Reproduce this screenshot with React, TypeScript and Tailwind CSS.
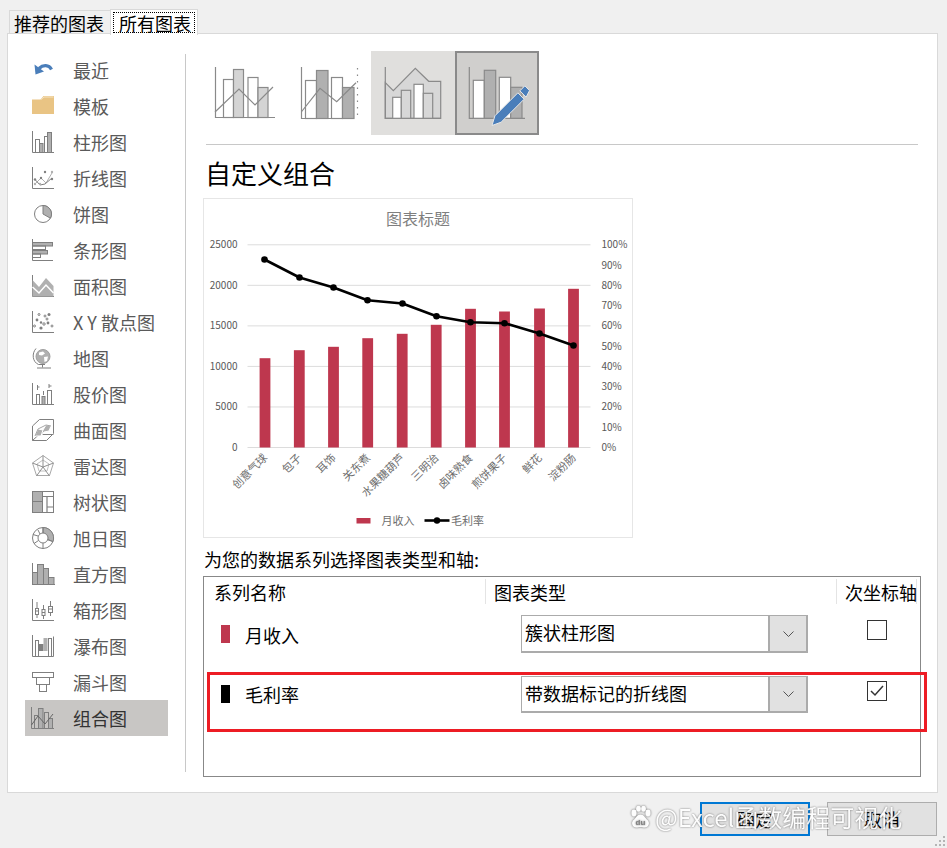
import React from "react";

const S = "#7f7f7f";
const G = "#b0b0b0";

function I({ children }: { children: React.ReactNode }) {
  return (
    <svg width="22" height="22" viewBox="0 0 22 22" fill="none" stroke={S} strokeWidth="1" className="shrink-0 overflow-visible">
      {children}
    </svg>
  );
}

const Dot = ({ x, y, f = S, r = 1.2 }: { x: number; y: number; f?: string; r?: number }) => (
  <circle cx={x} cy={y} r={r} fill={f} stroke="none" />
);

const icons: Record<string, React.ReactNode> = {
  recent: (
    <I>
      <path d="M19.5 10.5C17 5.5 11 5.5 7 9.5" stroke="#4a7eba" strokeWidth="3.2" />
      <path d="M2.5 5.5L3.5 15.5L12 12.5Z" fill="#4a7eba" stroke="none" />
    </I>
  ),
  folder: (
    <I>
      <path d="M0 4.5H8.5L11.5 1H22V19H0Z" fill="#e9c484" stroke="none" />
      <path d="M9 4.5L12 2H21.5" stroke="#f6e4c2" />
    </I>
  ),
  bar: (
    <I>
      <path d="M.5 0V21.5H22" />
      <rect x="3.5" y="8.5" width="4" height="13" />
      <rect x="7.5" y="12.5" width="3.5" height="9" fill={G} />
      <rect x="12.5" y="5.5" width="3" height="16" />
      <rect x="15.5" y="1.5" width="4" height="20" fill={G} />
    </I>
  ),
  line: (
    <I>
      <path d="M.5 0V21.5H22" />
      <path d="M3 17L9 11L14 16L20 6" stroke={G} />
      <path d="M3 12.5L8 18L13 17L20 11" stroke={S} />
      <Dot x={3} y={12.5} /><Dot x={13} y={5} /><Dot x={20} y={12} /><Dot x={9} y={11} />
      <Dot x={3} y={17} f={G} /><Dot x={8} y={17} f={G} /><Dot x={20} y={5} f={G} />
    </I>
  ),
  pie: (
    <I>
      <circle cx="11" cy="11" r="8.5" />
      <path d="M11 11V2.5A8.5 8.5 0 0 1 18.4 15.2Z" fill={G} />
    </I>
  ),
  hbar: (
    <I>
      <path d="M.5 0V21.5H21" />
      <rect x=".5" y="3.5" width="20" height="3.5" fill={G} />
      <rect x=".5" y="7" width="13" height="3.5" />
      <rect x=".5" y="11.5" width="15" height="3.5" fill={G} />
      <rect x=".5" y="15" width="8" height="3.5" />
    </I>
  ),
  area: (
    <I>
      <path d="M.5 0V21.5H22" />
      <path d="M.5 5L7 12L14 3L21.5 11V21.5H.5Z" fill={G} stroke="none" />
      <path d="M.5 12L7 18L14 10L21.5 18" stroke="#fff" strokeWidth="1.5" />
    </I>
  ),
  scatter: (
    <I>
      <path d="M.5 0V21.5H22" />
      <circle cx="7" cy="3.5" r="1" /><Dot x={17} y={3.5} r={1.5} /><circle cx="13" cy="5" r="1" />
      <Dot x={5} y={9} r={1.4} /><Dot x={16} y={12} r={1.4} /><circle cx="12" cy="13" r="1.2" />
      <Dot x={9} y={11.5} r={1.2} /><circle cx="2.5" cy="15" r="1" /><circle cx="20" cy="15" r="1" />
      <Dot x={9} y={17} r={1.6} /><circle cx="15" cy="8" r="1" />
    </I>
  ),
  map: (
    <I>
      <circle cx="11" cy="9.5" r="7" fill={G} stroke="#a0a0a0" />
      <path d="M7 5.5L11 4.5L13 6.5L10 8.5L7 8ZM12 10L16 9.5L15 14L12.5 15Z" fill="#fff" stroke="none" />
      <path d="M4 1.5C-.5 6.5 .5 15 6.5 17.5H13M10.5 18V20.5M5 21H19" />
    </I>
  ),
  stock: (
    <I>
      <path d="M.5 0V21.5H22" />
      <rect x="4.5" y="11.5" width="3" height="10" />
      <rect x="10" y="13.5" width="3" height="8" fill={G} />
      <rect x="15.5" y="7.5" width="4" height="14" />
      <path d="M5.5 2V7M11.5 8V12M17 1V5M5.5 4H7.5M17 3H19.5" />
    </I>
  ),
  surface: (
    <I>
      <path d="M.5 7L7.5 .5H21.5V14.5L14.5 21.5H.5Z" />
      <path d="M.5 21.5L7 15.5H21.5" />
      <path d="M3 17L6 10L11 11L14 6L19 7L17 12L12 13L9 17Z" fill={G} stroke="#fff" />
      <path d="M6 10L14 6M9 17L11 11" stroke="#fff" />
      <path d="M3 17L6 10L14 6L19 7" stroke={S} strokeWidth=".7" />
    </I>
  ),
  radar: (
    <I>
      <path d="M11 .5L21.5 8L17.5 20.5H4.5L.5 8Z" stroke="#a8a8a8" />
      <path d="M11 5L17 9L15 16H7L5 9Z" stroke="#c0c0c0" />
      <path d="M11 .5V12M21.5 8L11 12L17.5 21M4.5 21L11 12L.5 8" stroke="#8f8f8f" />
    </I>
  ),
  tree: (
    <I>
      <rect x=".5" y=".5" width="21" height="21" />
      <rect x=".5" y=".5" width="10" height="21" fill={G} />
      <path d="M.5 10.5H10.5M10.5 5.5H21.5M15 5.5V21.5M15 16H21.5" strokeWidth="1.2" />
    </I>
  ),
  sun: (
    <I>
      <circle cx="11" cy="11" r="10.5" />
      <path d="M11 .5A10.5 10.5 0 0 1 21 14.5L15.5 12.5A4.5 4.5 0 0 0 11 6.5Z" fill={G} />
      <circle cx="11" cy="11" r="5" fill="#fff" />
      <path d="M6.5 13.5L2 16.5M11 16V21.5M15.5 12.5L20.5 14.5M6 9L1 7.5M11 6V.5M6 3L8 7" stroke={S} />
    </I>
  ),
  hist: (
    <I>
      <path d="M.5 0V21.5H23" />
      <rect x=".5" y="9.5" width="5" height="12" fill={G} />
      <rect x="5.5" y="1.5" width="6" height="20" fill={G} />
      <rect x="11.5" y="5.5" width="5" height="16" fill={G} />
      <rect x="16.5" y="14.5" width="5.5" height="7" fill={G} />
    </I>
  ),
  box: (
    <I>
      <path d="M.5 0V21.5H22" />
      <rect x="3.5" y="9.5" width="3" height="6" />
      <rect x="10" y="10.5" width="3" height="6" />
      <rect x="16.5" y="7.5" width="4" height="6" />
      <path d="M5 3V9M5 15.5V19M11.5 6V10M11.5 16.5V20M18.5 2V7M18.5 13.5V17M3 12H6.5M10 13.5H13M16.5 10H20.5" />
    </I>
  ),
  fall: (
    <I>
      <path d="M.5 0V21.5H21.5V1.5" />
      <rect x="3.5" y="5.5" width="3" height="16" />
      <rect x="6.5" y="9" width="5" height="7" fill={S} stroke="none" />
      <rect x="11.5" y="3" width="4" height="13" fill={G} stroke="none" />
      <rect x="16.5" y="3.5" width="3" height="18" />
    </I>
  ),
  funnel: (
    <I>
      <rect x=".5" y="1.5" width="21" height="5" />
      <rect x="4.5" y="6.5" width="13" height="7" />
      <rect x="7.5" y="13.5" width="7" height="7" />
    </I>
  ),
  combo: (
    <I>
      <path d="M-.5 0V21.5H22" />
      <rect x="2.5" y="8.5" width="4" height="13" />
      <rect x="6.5" y="1.5" width="4.5" height="20" fill={G} />
      <rect x="12.5" y="5.5" width="4" height="16" />
      <rect x="16.5" y="11.5" width="4" height="10" fill={G} />
      <path d="M-.5 18L6 9L13 17L21 7" stroke="#666" />
    </I>
  ),
};

const items: [string, string][] = [
  ["recent", "最近"], ["folder", "模板"], ["bar", "柱形图"], ["line", "折线图"], ["pie", "饼图"],
  ["hbar", "条形图"], ["area", "面积图"], ["scatter", "X Y 散点图"], ["map", "地图"], ["stock", "股价图"],
  ["surface", "曲面图"], ["radar", "雷达图"], ["tree", "树状图"], ["sun", "旭日图"], ["hist", "直方图"],
  ["box", "箱形图"], ["fall", "瀑布图"], ["funnel", "漏斗图"], ["combo", "组合图"],
];

const TS = "#8a8a8a";

function Thumb1() {
  return (
    <svg width="84" height="84" viewBox="0 0 84 84" fill="none" stroke={TS} strokeWidth="1.2">
      <path d="M12.5 16V66.5H72" />
      <rect x="20.5" y="28.5" width="10" height="38" fill="#fff" />
      <rect x="30.5" y="18.5" width="10" height="48" fill="#d4d4d4" />
      <rect x="45" y="26.5" width="10" height="40" fill="#fff" />
      <rect x="55" y="36.5" width="10" height="30" fill="#d4d4d4" />
      <path d="M12 61L36 38L52 54L70 36" />
    </svg>
  );
}
function Thumb2() {
  return (
    <svg width="84" height="84" viewBox="0 0 84 84" fill="none" stroke={TS} strokeWidth="1.2">
      <path d="M14.5 16V67.5H67" />
      <rect x="18.5" y="29.5" width="11" height="38" fill="#fff" />
      <rect x="29.5" y="19.5" width="11.5" height="48" fill="#b0b0b0" />
      <rect x="44.5" y="26.5" width="11" height="41" fill="#fff" />
      <rect x="55.5" y="36.5" width="11.5" height="31" fill="#b0b0b0" />
      <path d="M14.3 61L33 37.3L49.7 50.7L69 31.7" />
      <path d="M70.5 17V67" strokeDasharray="1.5 5" />
    </svg>
  );
}
function Thumb3() {
  return (
    <svg width="84" height="84" viewBox="0 0 84 84" fill="none" stroke={TS} strokeWidth="1.2">
      <path d="M14.3 31.7L22.3 39.7L44.3 17.3L57.7 30.3H69.7V67.3H14.3Z" fill="#d7d7d7" />
      <path d="M14.3 16V67.3H70" />
      <rect x="21.7" y="46.3" width="8.6" height="21" fill="#fff" />
      <rect x="30.3" y="39.3" width="9.4" height="28" fill="#d7d7d7" />
      <rect x="43" y="33.3" width="9.3" height="34" fill="#fff" />
      <rect x="52.3" y="42.3" width="9.4" height="25" fill="#d7d7d7" />
    </svg>
  );
}
function Thumb4() {
  return (
    <svg width="80" height="80" viewBox="2 2 80 80" fill="none" stroke={TS} strokeWidth="1.2">
      <path d="M14.3 16V67.3H70" />
      <rect x="18.3" y="29.3" width="11" height="38" fill="#fff" />
      <rect x="29.3" y="19.3" width="11.4" height="48" fill="#b0b0b0" />
      <rect x="44.3" y="26.3" width="11.4" height="41" fill="#fff" />
      <rect x="55.7" y="36.3" width="11.3" height="31" fill="#b0b0b0" />
      <path d="M37 74.5L39.9 64.8L62.9 41.8L69.1 48.2L46.1 71.2Z" fill="#4a7eba" stroke="#e8e8e8" strokeWidth="1" />
      <path d="M64.9 39.8L69.9 34.8L74.5 39.6L71.1 46.2Z" fill="#4a7eba" stroke="#e8e8e8" strokeWidth="1" />
    </svg>
  );
}

const bars: [number, number][] = [
  [265.5, 357.7], [299.8, 349.7], [334, 346.3], [368.2, 337.7], [402.7, 333.3],
  [436.7, 324.3], [471, 308.3], [505, 311], [540, 308], [574, 288.3],
];
const linePts: [number, number][] = [
  [265, 259], [300, 277], [334, 287], [368, 299.7], [403, 303],
  [437, 315.7], [471, 321.7], [505, 322.7], [540, 333], [574, 345],
];
const cats = ["创意气球", "包子", "耳饰", "关东煮", "水果糖葫芦", "三明治", "卤味熟食", "煎饼果子", "鲜花", "淀粉肠"];
const lefts = ["25000", "20000", "15000", "10000", "5000", "0"];
const rights = ["100%", "90%", "80%", "70%", "60%", "50%", "40%", "30%", "20%", "10%", "0%"];

const cjk = '"Noto Sans CJK SC", sans-serif';

function Chart() {
  // viewBox in page coordinates
  return (
    <svg width="430" height="340" viewBox="203.5 197.5 430 340" className="block">
      <rect x="204" y="198" width="429" height="339" fill="#fff" stroke="#e6e6e6" />
      <text x="418.5" y="224" textAnchor="middle" fontSize="16" fill="#7f7f7f" fontFamily={cjk}>图表标题</text>
      {lefts.map((t, i) => {
        const y = 244.3 + i * 40.54;
        return (
          <g key={t}>
            <line x1="248" x2="591" y1={y} y2={y} stroke="#dcdcdc" strokeWidth="1" />
            <text x="238" y={y + 3.5} textAnchor="end" fontSize="10" fill="#595959" fontFamily={cjk}>{t}</text>
          </g>
        );
      })}
      {rights.map((t, i) => (
        <text key={t} x="602" y={244.3 + i * 20.27 + 3.5} fontSize="10" fill="#595959" fontFamily={cjk}>{t}</text>
      ))}
      {bars.map(([x, y]) => (
        <rect key={x} x={x - 5.4} y={y} width="10.8" height={447 - y} fill="#be374e" />
      ))}
      <polyline points={linePts.map((p) => p.join(",")).join(" ")} fill="none" stroke="#000" strokeWidth="2.6" strokeLinejoin="round" />
      {linePts.map(([x, y]) => (
        <circle key={x} cx={x} cy={y} r="3.3" fill="#000" />
      ))}
      {cats.map((c, i) => {
        const x = bars[i][0] + 3;
        return (
          <text key={c} x={x} y={458} textAnchor="end" fontSize="11" fill="#6e6e6e" fontFamily={cjk} transform={`rotate(-45 ${x} 458)`}>{c}</text>
        );
      })}
      <rect x="357" y="517.5" width="14" height="5.5" fill="#be374e" />
      <text x="382" y="524" fontSize="11" fill="#6e6e6e" fontFamily={cjk}>月收入</text>
      <line x1="425" x2="450" y1="520" y2="520" stroke="#000" strokeWidth="2.6" />
      <circle cx="437.5" cy="520" r="3.2" fill="#000" />
      <text x="451.5" y="524" fontSize="11" fill="#6e6e6e" fontFamily={cjk}>毛利率</text>
    </svg>
  );
}

function Dropdown({ text, h }: { text: string; h: string }) {
  return (
    <div className={`ml-[36px] mt-[8px] w-[287px] ${h} border-2 border-[#ababab] border-t border-l flex bg-white`}>
      <div className="flex-1 pl-[3px] leading-[33px]">{text}</div>
      <div className="w-[38px] bg-[#e1e1e1] border-l-2 border-[#ababab] flex items-center justify-center">
        <svg width="11" height="6" viewBox="0 0 11 6" fill="none" stroke="#555" strokeWidth="1">
          <path d="M.5 .5L5.5 5.5L10.5 .5" />
        </svg>
      </div>
    </div>
  );
}

export default function App() {
  return (
    <div
      className="relative w-[947px] h-[848px] overflow-hidden bg-[#f0f0f0] text-[18px] text-black"
      style={{ fontFamily: cjk }}
    >
      {/* tabs */}
      <div className="flex items-end h-[34px] pl-[9px] pt-[8px]">
        <div className="w-[101px] h-[24px] border-t border-l border-[#d9d9d9] pl-[4px] leading-[24px]">推荐的图表</div>
        <div className="w-[88px] h-[26px] border border-[#d9d9d9] border-b-0 bg-white p-[2px] relative z-10 -mb-px">
          <div className="w-full h-[21px] border border-dotted border-black pl-[5px] leading-[20px]">所有图表</div>
        </div>
      </div>

      {/* panel */}
      <div className="ml-[7px] w-[931px] h-[760px] -mt-px border border-[#d9d9d9] bg-white flex">
        <aside className="w-[177px] pl-[17px] pt-[18px] shrink-0">
          {items.map(([k, t]) => (
            <div
              key={k}
              className={`w-[143px] h-[36px] pl-[7px] flex items-center gap-[19px] ${k === "combo" ? "bg-[#c8c6c4] text-[#333]" : "text-[#5a5a5a]"}`}
            >
              {icons[k]}
              <span className="whitespace-nowrap">{t}</span>
            </div>
          ))}
        </aside>
        <div className="w-px h-[718px] mt-[20px] bg-[#c8c8c8] shrink-0" />
        <main className="pl-[17px] pt-[17px]">
          <div className="flex h-[84px]">
            <div className="w-[84px] h-[84px]"><Thumb1 /></div>
            <div className="w-[84px] h-[84px]"><Thumb2 /></div>
            <div className="w-[84px] h-[84px] bg-[#e0dfdd]"><Thumb3 /></div>
            <div className="w-[84px] h-[84px] bg-[#d0cfcd] border-2 border-[#8a8a8a]"><Thumb4 /></div>
          </div>
          <div className="ml-[3px] mt-[9px] w-[712px] h-px bg-[#c8c8c8]" />
          <h2 className="mt-[10px] ml-[2px] text-[26px] leading-[36px] font-normal">自定义组合</h2>
          <div className="mt-[7px]"><Chart /></div>
          <div className="mt-[8px] ml-[1px] leading-[26px] whitespace-nowrap">为您的数据系列选择图表类型和轴:</div>
          <div className="mt-[4px] w-[718px] h-[201px] border border-[#888] bg-white">
            <div className="flex h-[30px] pt-[2px]">
              <div className="w-[281px] pl-[10px] leading-[26px]">系列名称</div>
              <div className="w-[351px] pl-[8px] leading-[26px] border-l border-[#e4e4e4] h-[25px]">图表类型</div>
              <div className="w-[81px] pl-[8px] leading-[26px] border-x border-[#e4e4e4] h-[25px] whitespace-nowrap">次坐标轴</div>
            </div>
            <div className="flex h-[61px]">
              <div className="w-[281px] flex pl-[17px] gap-[15px]">
                <div className="w-[9px] h-[18px] mt-[18px] bg-[#be374e]" />
                <div className="mt-[15px] leading-[26px]">月收入</div>
              </div>
              <div className="w-[351px]"><Dropdown text="簇状柱形图" h="h-[38px]" /></div>
              <div className="pl-[31px]"><div className="mt-[13px] w-[20px] h-[20px] border border-[#333]" /></div>
            </div>
            <div className="flex">
              <div className="w-[281px] flex pl-[17px] gap-[15px]">
                <div className="w-[9px] h-[18px] mt-[17px] bg-black" />
                <div className="mt-[13px] leading-[26px]">毛利率</div>
              </div>
              <div className="w-[351px]"><Dropdown text="带数据标记的折线图" h="h-[37px]" /></div>
              <div className="pl-[31px]">
                <div className="mt-[13px] w-[20px] h-[20px] border border-[#333] flex items-center justify-center">
                  <svg width="14" height="12" viewBox="0 0 14 12" fill="none" stroke="#333" strokeWidth="1.5">
                    <path d="M1 6L5 10L13 1" />
                  </svg>
                </div>
              </div>
            </div>
          </div>
        </main>
      </div>

      {/* footer */}
      <div className="flex justify-end gap-[17px] pr-[10px] pt-[9px]">
        <button className="w-[110px] h-[34px] border-2 border-[#0078d4] bg-[#e1e1e1]">确定</button>
        <button className="w-[110px] h-[34px] border border-[#adadad] bg-[#e1e1e1]">取消</button>
      </div>

      {/* red annotation */}
      <div className="absolute left-[207px] top-[672px] w-[720px] h-[60px] border-[3px] border-[#ed1c24]" />

      {/* watermark */}
      <div className="absolute left-[629px] top-[801px] flex items-center gap-[3px] text-white text-[24px] leading-[32px] whitespace-nowrap opacity-90 [text-shadow:0_0_2px_#555]">
        <svg width="23" height="24" viewBox="0 0 23 24" className="[filter:drop-shadow(0_0_1px_#555)]">
          <ellipse cx="5" cy="8" rx="2.6" ry="3.4" fill="#fff" />
          <ellipse cx="9.5" cy="3.8" rx="2.4" ry="3" fill="#fff" />
          <ellipse cx="14.5" cy="3.8" rx="2.4" ry="3" fill="#fff" />
          <ellipse cx="19" cy="8" rx="2.6" ry="3.4" fill="#fff" />
          <path d="M11.5 9.5C8 9.5 7 13 4.5 15C1.5 18 3.5 22.5 7 22.5C9 22.5 10 22 11.5 22C13 22 14 22.5 16 22.5C19.5 22.5 21.5 18 18.5 15C16 13 15 9.5 11.5 9.5Z" fill="#fff" />
          <text x="11.5" y="20" textAnchor="middle" fontSize="8" fontWeight="700" fill="#777" fontFamily="Liberation Sans, sans-serif">du</text>
        </svg>
        <span>@Excel函数编程可视化</span>
      </div>

      {/* grip */}
      <svg width="12" height="12" viewBox="0 0 12 12" className="absolute right-0 bottom-0" fill="#b5b5b5">
        <rect x="8" y="0" width="2" height="2" />
        <rect x="4" y="4" width="2" height="2" /><rect x="8" y="4" width="2" height="2" />
        <rect x="0" y="8" width="2" height="2" /><rect x="4" y="8" width="2" height="2" /><rect x="8" y="8" width="2" height="2" />
      </svg>
    </div>
  );
}
